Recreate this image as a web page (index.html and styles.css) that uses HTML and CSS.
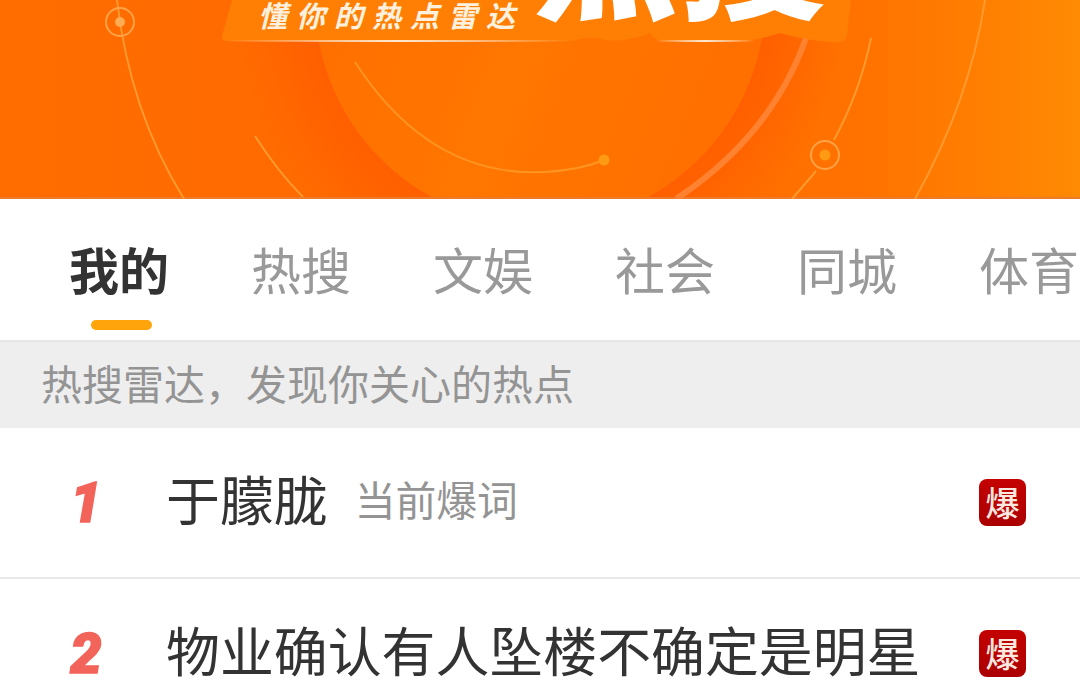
FILE: index.html
```html
<!DOCTYPE html>
<html lang="zh-CN">
<head>
  <meta charset="UTF-8">
  <title>微博热搜</title>
  <link rel="stylesheet" href="styles.css">
</head>
<body>
  <header class="banner">
    <svg class="banner-art" width="1080" height="199" viewBox="0 0 1080 199">
      <defs>
        <linearGradient id="bg" x1="0" x2="1" y1="0" y2="0">
          <stop offset="0" stop-color="#ff6c00"/>
          <stop offset="0.5" stop-color="#ff6a00"/>
          <stop offset="0.8" stop-color="#ff7200"/>
          <stop offset="1" stop-color="#ff8a03"/>
        </linearGradient>
        <radialGradient id="halo" gradientUnits="userSpaceOnUse" cx="540" cy="0" r="305">
          <stop offset="0.74" stop-color="#ff5f00"/>
          <stop offset="1" stop-color="#ff5f00" stop-opacity="0"/>
        </radialGradient>
        <linearGradient id="disc" x1="0" x2="1" y1="0" y2="0.4">
          <stop offset="0" stop-color="#ff6c00"/>
          <stop offset="0.6" stop-color="#ff7600"/>
          <stop offset="1" stop-color="#ff7000"/>
        </linearGradient>
        <linearGradient id="shine" x1="0" x2="1" y1="0" y2="0">
          <stop offset="0" stop-color="#fff" stop-opacity="0"/>
          <stop offset="0.5" stop-color="#ffe8d0"/>
          <stop offset="1" stop-color="#fff" stop-opacity="0"/>
        </linearGradient>
      </defs>
      <rect width="1080" height="199" fill="url(#bg)"/>
      <circle cx="540" cy="0" r="305" fill="url(#halo)"/>
      <circle cx="540" cy="0" r="225" fill="url(#disc)"/>
      <rect y="197" width="1080" height="2" fill="#ee7a2c"/>

      <g fill="none" stroke="#ff9a2e" stroke-width="2">
        <path d="M117 0 Q130 112 184 199"/>
        <path d="M255 136 Q278 172 303 197"/>
        <path d="M355 62 Q430 178 545 172 Q580 170 604 160" stroke="#ff9420"/>
        <path d="M871 38 Q860 92 834 140"/>
        <path d="M816 171 Q805 184 792 199"/>
        <path d="M985 0 Q970 100 915 199"/>
        <circle cx="120" cy="22" r="14" stroke="#ffa347"/>
        <circle cx="825" cy="155" r="14" stroke="#ffa347"/>
      </g>
      <path d="M806 38 Q772 135 676 199" fill="none" stroke="#ff8230" stroke-width="6"/>
      <circle cx="120" cy="22" r="5" fill="#ffac55"/>
      <circle cx="604" cy="160" r="5.5" fill="#ff9a14"/>
      <circle cx="825" cy="155" r="5.5" fill="#ff9a14"/>

      <path d="M232 0 L222 36 Q221 41 227 41 L573 41 Q586 36 597 38 Q610 42 623 40 Q638 38 650 33 Q656 41 663 41 L747 41 Q765 38 780 33 Q805 40 830 42 Q846 44 847 35 L851 0 Z" fill="#ff7f05"/>
      <rect x="225" y="40" width="345" height="2" fill="url(#shine)"/>
      <rect x="655" y="40" width="100" height="2" fill="url(#shine)"/>
    </svg>
    <span class="slogan">懂你的热点雷达</span>
    <span class="logo-text">热搜</span>
  </header>

  <nav class="tabs">
    <a class="tab active">我的</a>
    <a class="tab">热搜</a>
    <a class="tab">文娱</a>
    <a class="tab">社会</a>
    <a class="tab">同城</a>
    <a class="tab">体育</a>
  </nav>

  <div class="notice">热搜雷达，发现你关心的热点</div>

  <ul class="rank-list">
    <li class="rank-row">
      <span class="rank-num">1</span>
      <span class="rank-title">于朦胧</span>
      <span class="rank-note">当前爆词</span>
      <span class="badge">爆</span>
    </li>
    <li class="rank-row">
      <span class="rank-num">2</span>
      <span class="rank-title">物业确认有人坠楼不确定是明星</span>
      <span class="badge">爆</span>
    </li>
  </ul>
</body>
</html>
```

FILE: styles.css
```css
:root {
  --cjk: "Noto Sans CJK SC", "Noto Sans", sans-serif;
  --dark: #333;
  --grey: #949494;
  --line: #e8e8e8;
}

html, body {
  margin: 0;
  padding: 0;
  height: 690px;
  overflow: hidden;
  background: #fff;
  font-family: var(--cjk);
  color: var(--dark);
}

.banner {
  position: relative;
  height: 199px;
  overflow: hidden;
}

.banner-art {
  display: block;
  filter: blur(0.6px);
}

.slogan {
  position: absolute;
  left: 258px;
  top: -4px;
  font-size: 29px;
  line-height: 36px;
  letter-spacing: 9px;
  font-weight: 700;
  font-style: italic;
  color: #fff1de;
  white-space: nowrap;
}

.logo-text {
  position: absolute;
  left: 542px;
  top: -150px;
  font-size: 146px;
  line-height: 190px;
  font-weight: 900;
  color: #fff;
  white-space: nowrap;
  transform: skewX(-8deg);
}

.tabs {
  display: flex;
  gap: 82px;
  height: 141px;
  padding-left: 69px;
  box-sizing: border-box;
  white-space: nowrap;
}

.tab {
  position: relative;
  flex: none;
  font-size: 50px;
  line-height: 139px;
  color: #999;
}

.tab.active {
  font-weight: 700;
  color: var(--dark);
}

.tab.active::after {
  content: "";
  position: absolute;
  left: 22px;
  bottom: 10px;
  width: 61px;
  height: 10px;
  border-radius: 5px;
  background: #ffa40a;
}

.notice {
  height: 88px;
  padding-left: 41px;
  box-sizing: border-box;
  border-top: 2px solid #e6e6e6;
  background: #eee;
  font-size: 41px;
  line-height: 80px;
  color: var(--grey);
}

.rank-list {
  list-style: none;
  margin: 0;
  padding: 0;
}

.rank-row {
  display: flex;
  align-items: center;
  height: 151px;
  box-sizing: border-box;
  padding-right: 54px;
  border-bottom: 2px solid var(--line);
}

.rank-num {
  flex: none;
  width: 172px;
  margin-right: -6px;
  text-align: center;
  font-family: Roboto, "Liberation Sans", sans-serif;
  font-size: 56px;
  font-weight: 900;
  font-style: italic;
  color: #f2645a;
  -webkit-text-stroke: 1.5px #f2645a;
}

.rank-title {
  margin-bottom: 10px;
  font-size: 53.9px;
  color: var(--dark);
  white-space: nowrap;
}

.rank-note {
  margin-left: 27px;
  margin-bottom: 8px;
  font-size: 40.8px;
  color: var(--grey);
}

.badge {
  width: 47px;
  height: 47px;
  margin-left: auto;
  border-radius: 8px;
  background: linear-gradient(#c40202, #ab0000);
  color: #fde8e0;
  font-size: 34px;
  font-weight: 500;
  line-height: 45px;
  text-align: center;
}
```
